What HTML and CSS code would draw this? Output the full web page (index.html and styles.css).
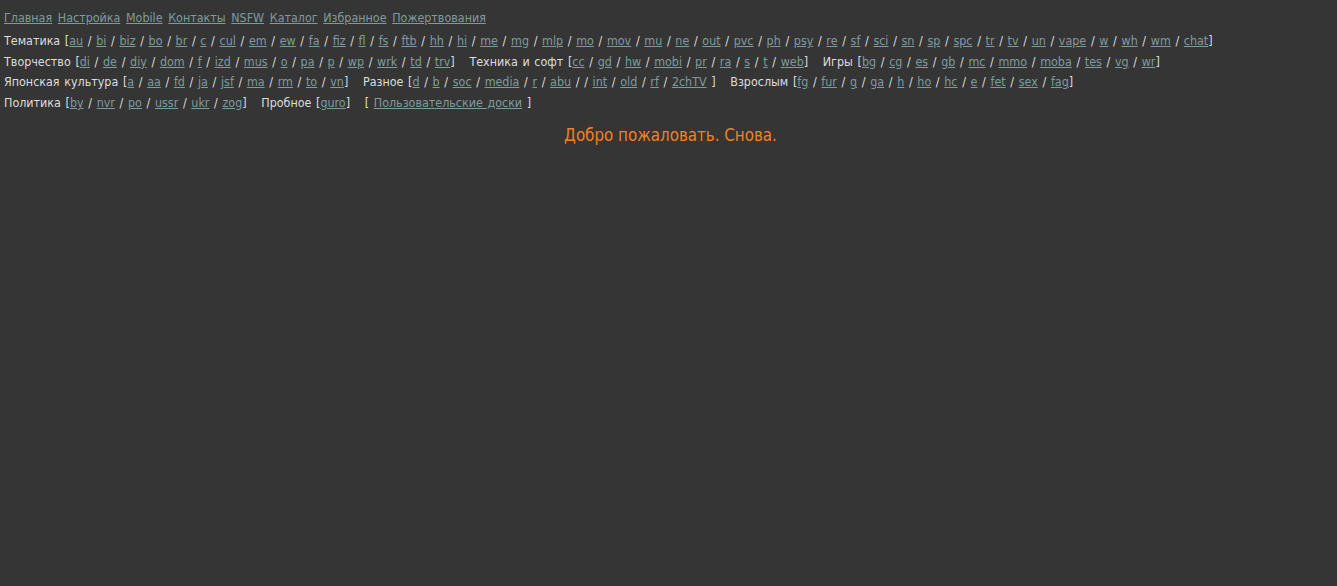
FILE: index.html
```html
<!DOCTYPE html>
<html lang="ru">
<head>
<meta charset="utf-8">
<title>Главная</title>
<link rel="stylesheet" href="styles.css">
</head>
<body>
<div class="header">
  <nav class="topnav">
    <a href="#">Главная</a> <a href="#">Настройка</a> <a href="#">Mobile</a> <a href="#">Контакты</a> <a href="#">NSFW</a> <a href="#">Каталог</a> <a href="#">Избранное</a> <a href="#">Пожертвования</a>
  </nav>
  <div class="boards">
    <div class="row">
      <span class="cat">Тематика [<a href="#">au</a> / <a href="#">bi</a> / <a href="#">biz</a> / <a href="#">bo</a> / <a href="#">br</a> / <a href="#">c</a> / <a href="#">cul</a> / <a href="#">em</a> / <a href="#">ew</a> / <a href="#">fa</a> / <a href="#">fiz</a> / <a href="#">fl</a> / <a href="#">fs</a> / <a href="#">ftb</a> / <a href="#">hh</a> / <a href="#">hi</a> / <a href="#">me</a> / <a href="#">mg</a> / <a href="#">mlp</a> / <a href="#">mo</a> / <a href="#">mov</a> / <a href="#">mu</a> / <a href="#">ne</a> / <a href="#">out</a> / <a href="#">pvc</a> / <a href="#">ph</a> / <a href="#">psy</a> / <a href="#">re</a> / <a href="#">sf</a> / <a href="#">sci</a> / <a href="#">sn</a> / <a href="#">sp</a> / <a href="#">spc</a> / <a href="#">tr</a> / <a href="#">tv</a> / <a href="#">un</a> / <a href="#">vape</a> / <a href="#">w</a> / <a href="#">wh</a> / <a href="#">wm</a> / <a href="#">chat</a>]</span>
    </div>
    <div class="row">
      <span class="cat">Творчество [<a href="#">di</a> / <a href="#">de</a> / <a href="#">diy</a> / <a href="#">dom</a> / <a href="#">f</a> / <a href="#">izd</a> / <a href="#">mus</a> / <a href="#">o</a> / <a href="#">pa</a> / <a href="#">p</a> / <a href="#">wp</a> / <a href="#">wrk</a> / <a href="#">td</a> / <a href="#">trv</a>]</span>
      <span class="cat">Техника и софт [<a href="#">cc</a> / <a href="#">gd</a> / <a href="#">hw</a> / <a href="#">mobi</a> / <a href="#">pr</a> / <a href="#">ra</a> / <a href="#">s</a> / <a href="#">t</a> / <a href="#">web</a>]</span>
      <span class="cat">Игры [<a href="#">bg</a> / <a href="#">cg</a> / <a href="#">es</a> / <a href="#">gb</a> / <a href="#">mc</a> / <a href="#">mmo</a> / <a href="#">moba</a> / <a href="#">tes</a> / <a href="#">vg</a> / <a href="#">wr</a>]</span>
    </div>
    <div class="row">
      <span class="cat">Японская культура [<a href="#">a</a> / <a href="#">aa</a> / <a href="#">fd</a> / <a href="#">ja</a> / <a href="#">jsf</a> / <a href="#">ma</a> / <a href="#">rm</a> / <a href="#">to</a> / <a href="#">vn</a>]</span>
      <span class="cat">Разное [<a href="#">d</a> / <a href="#">b</a> / <a href="#">soc</a> / <a href="#">media</a> / <a href="#">r</a> / <a href="#">abu</a> / / <a href="#">int</a> / <a href="#">old</a> / <a href="#">rf</a> / <a href="#">2chTV</a> ]</span>
      <span class="cat">Взрослым [<a href="#">fg</a> / <a href="#">fur</a> / <a href="#">g</a> / <a href="#">ga</a> / <a href="#">h</a> / <a href="#">ho</a> / <a href="#">hc</a> / <a href="#">e</a> / <a href="#">fet</a> / <a href="#">sex</a> / <a href="#">fag</a>]</span>
    </div>
    <div class="row">
      <span class="cat">Политика [<a href="#">by</a> / <a href="#">nvr</a> / <a href="#">po</a> / <a href="#">ussr</a> / <a href="#">ukr</a> / <a href="#">zog</a>]</span>
      <span class="cat">Пробное [<a href="#">guro</a>]</span>
      <span class="cat">[ <a href="#">Пользовательские доски</a> ]</span>
    </div>
  </div>
</div>
<main class="welcome">Добро пожаловать. Снова.</main>
</body>
</html>
```

FILE: styles.css
```css
html, body {
  background: #353535;
}
body {
  margin: 0;
  padding: 9px 4px;
  font-family: "DejaVu Sans Condensed", "DejaVu Sans", sans-serif;
  font-size: 12.4px;
  color: #dddddd;
}
a {
  color: #7e9c9e;
  text-decoration: underline;
}
.topnav {
  line-height: 18px;
  margin-bottom: 4px;
  word-spacing: 2.1px;
}
.boards .row {
  line-height: 20.7px;
  white-space: nowrap;
  word-spacing: 1.12px;
}
.cat {
  margin-right: 10px;
}
.welcome {
  display: block;
  text-align: center;
  color: #f5801f;
  font-size: 16.8px;
  margin-top: 11px;
  padding-left: 4px;
}
```
